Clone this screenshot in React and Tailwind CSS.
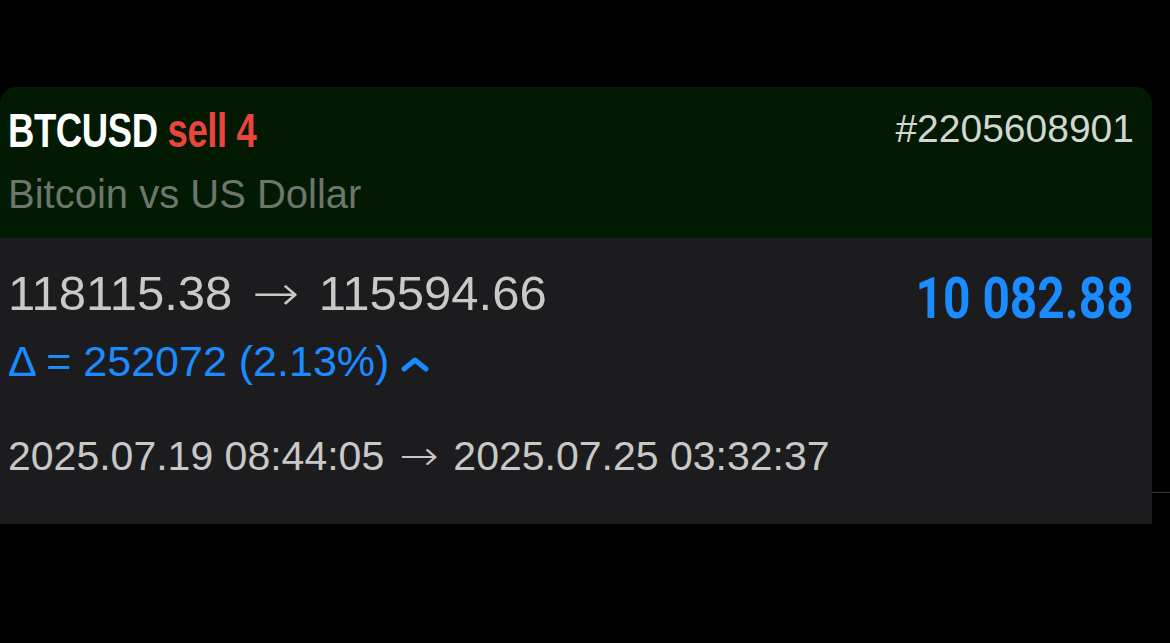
export default function App() {
  return (
    <div className="min-h-[643px] bg-black font-['Liberation_Sans',Arial,sans-serif]">
      <div className="flex pt-[87px]">
        {/* card */}
        <div className="w-[1152px] shrink-0 overflow-hidden rounded-t-[16px]">
          {/* header */}
          <div className="flex h-[151px] items-start justify-between bg-[#021902] pl-[8px] pr-[18px] pt-[20px]">
            <div className="flex flex-col">
              <div className="h-[48px] text-[48px] font-bold leading-none">
                <span className="inline-block origin-left scale-x-[0.76] whitespace-nowrap tracking-[-0.5px]">
                  <span className="text-white">BTCUSD</span>{" "}
                  <span className="text-[#e8453c]">sell 4</span>
                </span>
              </div>
              <div className="mt-[19px] text-[40px] leading-none text-[#6b776b]">
                Bitcoin vs US Dollar
              </div>
            </div>
            <div className="mt-[2px] text-[39px] leading-none text-[#d2d6d2]">
              #2205608901
            </div>
          </div>

          {/* body */}
          <div className="h-[286px] bg-[#1c1c1e] pl-[8px] pr-[18px] pt-[31px]">
            <div className="flex items-start justify-between">
              <div className="flex flex-col">
                <div className="whitespace-nowrap text-[49px] leading-none text-[#c9c9c9]">
                  118115.38{" "}
                  <span className="mx-[9px] inline-block scale-x-[1.15] font-['DejaVu_Sans',sans-serif] font-extralight">
                    →
                  </span>{" "}
                  115594.66
                </div>
                <div className="mt-[22px] flex items-center text-[43px] leading-none text-[#1a8cff]">
                  <span>Δ = 252072 (2.13%)</span>
                  <svg
                    className="ml-[11px] mt-[4px]"
                    width="30"
                    height="16"
                    viewBox="0 0 30 16"
                    fill="none"
                  >
                    <polyline
                      points="4,13 15,4 26,13"
                      stroke="#1a8cff"
                      strokeWidth="5"
                      strokeLinecap="round"
                      strokeLinejoin="round"
                    />
                  </svg>
                </div>
              </div>
              <div className="mt-[1px] font-['Roboto',sans-serif] text-[57px] font-bold leading-none text-[#1a8cff]">
                <span className="inline-block origin-right scale-x-[0.84] whitespace-nowrap">
                  10 082.88
                </span>
              </div>
            </div>
            <div className="mt-[53px] whitespace-nowrap text-[41px] leading-none text-[#c8c8c8]">
              2025.07.19 08:44:05{" "}
              <span className="mx-[6px] inline-block scale-x-[1.15] font-['DejaVu_Sans',sans-serif] font-extralight">
                →
              </span>{" "}
              2025.07.25 03:32:37
            </div>
          </div>
        </div>

        {/* faint divider at the right edge */}
        <div className="mt-[405px] h-px flex-1 self-start bg-[#3a3a3a]" />
      </div>
    </div>
  );
}
